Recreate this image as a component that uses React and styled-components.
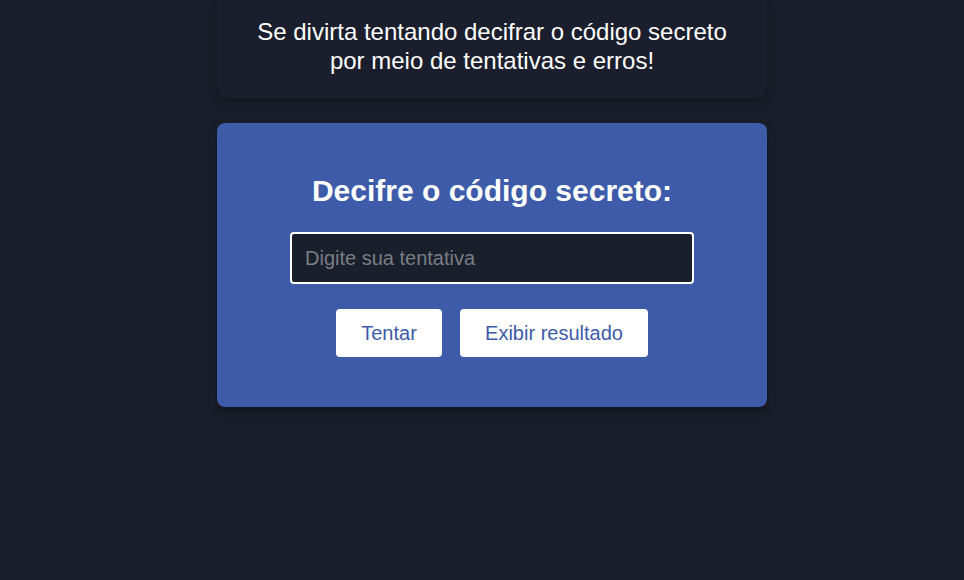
import React from 'react';
import styled, { createGlobalStyle } from 'styled-components';

const GlobalStyle = createGlobalStyle`
  html, body {
    margin: 0;
    padding: 0;
    background: #1a1e2a;
    font-family: "Liberation Sans", Arial, sans-serif;
  }
`;

const Page = styled.main`
  min-height: 580px;
  padding-left: 20px;
  display: flex;
  flex-direction: column;
  align-items: center;
  gap: 25px;
`;

const Intro = styled.section`
  width: 550px;
  box-sizing: border-box;
  padding: 17px 20px 23px;
  background: #1b1f2d;
  border-radius: 0 0 12px 12px;
  box-shadow: 0 4px 10px rgba(0, 0, 0, 0.25);
  color: #ffffff;
  font-size: 24px;
  line-height: 29px;
  text-align: center;
`;

const GameCard = styled.section`
  width: 550px;
  height: 284px;
  box-sizing: border-box;
  padding: 50px 0 0;
  background: #3d5ba9;
  border-radius: 8px;
  box-shadow: 0 4px 10px rgba(0, 0, 0, 0.3);
  display: flex;
  flex-direction: column;
  align-items: center;
`;

const Title = styled.h2`
  margin: 0;
  color: #ffffff;
  font-size: 30px;
  font-weight: bold;
  line-height: 36px;
`;

const GuessInput = styled.input`
  margin-top: 23px;
  width: 404px;
  height: 52px;
  box-sizing: border-box;
  padding: 0 13px;
  background: #1a1f2c;
  border: 2px solid #ffffff;
  border-radius: 4px;
  color: #ffffff;
  font-family: inherit;
  font-size: 20px;
  outline: none;

  &::placeholder {
    color: #7a7d84;
  }
`;

const Actions = styled.div`
  margin-top: 25px;
  display: flex;
  gap: 18px;
`;

const Button = styled.button`
  width: ${p => p.$w}px;
  height: 48px;
  border: none;
  border-radius: 4px;
  background: #ffffff;
  color: #3d5ba9;
  font-family: inherit;
  font-size: 20px;
  cursor: pointer;
`;

export default function App() {
  return (
    <>
      <GlobalStyle />
      <Page>
        <Intro>
          Se divirta tentando decifrar o código secreto
          <br />
          por meio de tentativas e erros!
        </Intro>
        <GameCard>
          <Title>Decifre o código secreto:</Title>
          <GuessInput placeholder="Digite sua tentativa" />
          <Actions>
            <Button $w={106}>Tentar</Button>
            <Button $w={188}>Exibir resultado</Button>
          </Actions>
        </GameCard>
      </Page>
    </>
  );
}
